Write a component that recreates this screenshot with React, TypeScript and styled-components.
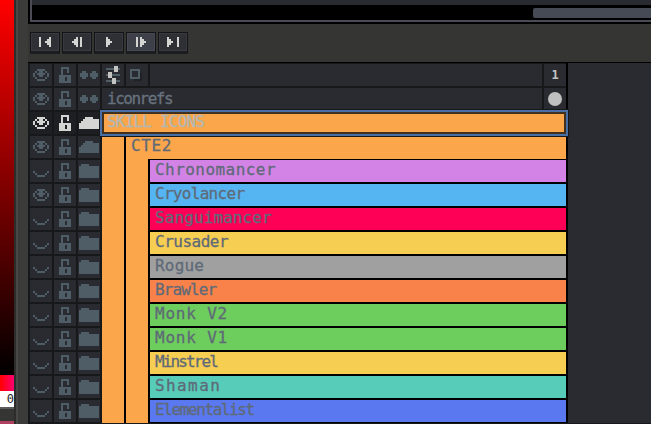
import styled, { createGlobalStyle } from 'styled-components'

const GlobalStyle = createGlobalStyle`
  html, body {
    margin: 0;
    padding: 0;
    background: #353533;
  }
`

const Page = styled.div`
  display: flex;
  width: 651px;
  height: 424px;
  overflow: hidden;
  background: #353533;
`

const ColorColumn = styled.div`
  display: flex;
  flex-direction: column;
  flex: none;
  width: 14px;
  border-right: 2px solid #2c2c2b;
`

const ShadeBar = styled.div`
  height: 375px;
  flex: none;
  background: linear-gradient(180deg, #ff0000 0%, #000000 100%);
`

const HueBar = styled.div`
  height: 16px;
  flex: none;
  background: linear-gradient(90deg, #ff0000, #ff0070);
`

const Swatch = styled.div`
  height: 16px;
  flex: none;
  background: #fff;
  border-bottom: 2px solid #5a5a58;
  color: #222;
  font: 12px/16px 'DejaVu Sans Mono', monospace;
  text-align: right;
  white-space: nowrap;
`

const ColumnFill = styled.div`
  flex: 1;
`

const PinkEdge = styled.div`
  height: 3px;
  flex: none;
  background: #b04060;
`

const Gutter = styled.div`
  flex: none;
  width: 10px;
  border-left: 2px solid #474745;
  background: #3b3b39;
`

const Main = styled.div`
  display: flex;
  flex-direction: column;
  flex: 1;
  min-width: 0;
`

const Preview = styled.div`
  flex: none;
  height: 24px;
  padding-left: 2px;
  box-sizing: border-box;
  background: #000;
`

const PreviewBody = styled.div`
  height: 22px;
  border-left: 2px solid #4b4b55;
  display: flex;
  flex-direction: column;
`

const PreviewTop = styled.div`
  height: 5px;
  flex: none;
  background: #2a2b30;
  border-bottom: 1px solid #000;
`

const ScrollTrack = styled.div`
  flex: none;
  height: 14px;
  padding-top: 2px;
  box-sizing: border-box;
  display: flex;
  justify-content: flex-end;
`

const ScrollThumb = styled.div`
  width: 118px;
  height: 10px;
  border-radius: 2px 0 0 2px;
  background: #454a55;
`

const PreviewRule = styled.div`
  flex: none;
  height: 2px;
  background: #4b4b55;
`

const Transport = styled.div`
  flex: none;
  height: 39px;
  display: flex;
  align-items: flex-start;
  gap: 2px;
  padding: 8px 0 0 2px;
  box-sizing: border-box;
  border-bottom: 1px solid #000;
`

const TransportButton = styled.div<{ $hover?: boolean }>`
  width: 30px;
  height: 22px;
  display: flex;
  align-items: center;
  justify-content: center;
  box-sizing: border-box;
  border: 1px solid #141416;
  border-bottom: 3px solid #1c1d20;
  background: ${(p) => (p.$hover ? '#3d4048' : '#2f3036')};
  box-shadow: inset 0 0 0 1px ${(p) => (p.$hover ? '#464953' : '#393a41')};
`

const Layers = styled.div`
  flex: 1;
  min-height: 0;
  padding-left: 2px;
  background: #17181a;
`

const Row = styled.div`
  display: flex;
  height: 24px;
`

const ToggleCell = styled.div<{ $active?: boolean }>`
  flex: none;
  width: 22px;
  height: 22px;
  margin: 1px 2px 1px 0;
  display: flex;
  align-items: center;
  justify-content: center;
  background: ${(p) => (p.$active ? '#1e1f23' : '#2a2b30')};
`

const Blank = styled.div`
  flex: none;
  width: 392px;
  height: 22px;
  margin: 1px 2px 1px 0;
  background: #2a2b30;
`

const LayerName = styled.div`
  flex: none;
  width: 435px;
  height: 22px;
  margin: 1px 2px 1px 0;
  padding-left: 5px;
  background: #2a2b30;
  color: #68727e;
  font: 16px/21px 'DejaVu Sans Mono', monospace;
  -webkit-text-stroke: 0.3px #68727e;
  letter-spacing: -1.5px;
  white-space: nowrap;
`

const FrameArea = styled.div`
  flex: 1;
  background: #2a2b30;
  border-left: 2px solid #000;
`

const FrameCell = styled.div`
  flex: none;
  width: 22px;
  height: 22px;
  margin: 1px 0;
  display: flex;
  align-items: center;
  justify-content: center;
  background: #2a2b30;
  color: #c4c4c4;
  font: bold 12px 'DejaVu Sans Mono', monospace;
`

const Cel = styled.span`
  width: 14px;
  height: 14px;
  border-radius: 50%;
  background: #c0c0c0;
`

const Selected = styled.div`
  flex: none;
  width: 468px;
  height: 26px;
  margin: -1px -2px -1px -2px;
  position: relative;
  box-sizing: border-box;
  border: 2px solid #4a6fa5;
  outline: 1px solid #17181a;
  background: #fba64a;
  box-shadow: inset 0 0 0 2px #42301f;
  padding-left: 5px;
  color: #b3b7b2;
  font: 16px/20px 'DejaVu Sans Mono', monospace;
  -webkit-text-stroke: 0.3px #b3b7b2;
  letter-spacing: -0.8px;
  white-space: nowrap;
`

const Tree = styled.div`
  flex: none;
  width: 464px;
  height: 24px;
  display: flex;
  background: #fba64a;
`

const Indent = styled.div`
  flex: none;
  width: 22px;
  background: #fba64a;
  border-right: 2px solid #000;
`

const IndentPlain = styled.div`
  flex: none;
  width: 22px;
  background: #fba64a;
`

const Label = styled.div<{ $bg: string; $spacing: number }>`
  flex: 1;
  padding-left: 5px;
  margin: 1px 0;
  height: 22px;
  background: ${(p) => p.$bg};
  border-left: 2px solid #000;
  color: #5f6a78;
  font: 16px/20px 'DejaVu Sans Mono', monospace;
  -webkit-text-stroke: 0.3px #5f6a78;
  letter-spacing: ${(p) => p.$spacing}px;
  white-space: nowrap;
  box-shadow: 0 -1px 0 #000, 0 1px 0 #000;
`

const GroupLabel = styled.div`
  flex: 1;
  padding-left: 5px;
  color: #5f6a78;
  font: 16px/22px 'DejaVu Sans Mono', monospace;
  -webkit-text-stroke: 0.3px #5f6a78;
  letter-spacing: 0.6px;
`

const Pixels = styled.svg`
  display: block;
  shape-rendering: crispEdges;
`

const LIGHT = '#c4c4c2'
const SHADOW = '#202125'

function PixelIcon({ rows, color }: { rows: string[]; color: string }) {
  const width = rows[0].length
  const fills: Record<string, string> = { '#': color, o: LIGHT, d: SHADOW }
  return (
    <Pixels width={width * 2} height={rows.length * 2} viewBox={`0 0 ${width} ${rows.length}`}>
      {rows.flatMap((row, y) =>
        row.split('').map((c, x) =>
          fills[c] ? <rect key={`${x}-${y}`} x={x} y={y} width={1} height={1} fill={fills[c]} /> : null,
        ),
      )}
    </Pixels>
  )
}

const EYE = ['..####..', '.#.##.#.', '#.####.#', '#..##..#', '.#....#.', '..####..']
const EYE_CLOSED = ['........', '........', '........', '#......#', '.#....#.', '..####..']
const LOCK = ['.####.', '.#..#.', '.#..#.', '.#....', '######', '###.##', '###.##', '######']
const DOTS = ['.##...##.', '####.####', '####.####', '.##...##.']
const FOLDER = ['.####.....', '##########', '##########', '##########', '##########', '##########', '##########']
const FOLDER_OPEN = ['...####...', '..########', '.#########', '##########', '##########', '##########']
const SKIP_START = ['#....#', '#...##', '#..###', '#...##', '#....#']
const STEP_BACK = ['..#.#', '.##.#', '###.#', '.##.#', '..#.#']
const PLAY = ['#..', '##.', '###', '##.', '#..']
const STEP_NEXT = ['#.#..', '#.##.', '#.###', '#.##.', '#.#..']
const SKIP_END = ['#....#', '##...#', '###..#', '##...#', '#....#']
const SLIDERS = ['....oo.', '####oo#', '....oo.', '.oo....', '#oo####', '.oo....', '...oo..', '###oo##', '...oo..']
const SQUARE = ['#####..', '#...#..', '#...#d.', '#...#d.', '#####d.', '..dddd.']

const MUTED = '#4f5e66'
const BRIGHT = '#d4d4d2'

const children = [
  { name: 'Chronomancer', bg: '#d383e5', spacing: 0.45, hidden: true },
  { name: 'Cryolancer', bg: '#55b5f3', spacing: -0.7, hidden: false },
  { name: 'Sanguimancer', bg: '#ff0057', spacing: 0.1, hidden: true },
  { name: 'Crusader', bg: '#f6ce52', spacing: -0.5, hidden: true },
  { name: 'Rogue', bg: '#a0a0a0', spacing: 0.2, hidden: true },
  { name: 'Brawler', bg: '#f9824a', spacing: -0.9, hidden: true },
  { name: 'Monk V2', bg: '#6dcd5d', spacing: 0.8, hidden: true },
  { name: 'Monk V1', bg: '#6dcd5d', spacing: 0.8, hidden: true },
  { name: 'Minstrel', bg: '#f6ce52', spacing: -1.9, hidden: true },
  { name: 'Shaman', bg: '#57ccb8', spacing: 1.4, hidden: true },
  { name: 'Elementalist', bg: '#5a78f0', spacing: -1.4, hidden: true },
]

function Toggles({ eye, folder, color = MUTED, active }: { eye: string[]; folder: string[]; color?: string; active?: boolean }) {
  return (
    <>
      <ToggleCell $active={active}><PixelIcon rows={eye} color={color} /></ToggleCell>
      <ToggleCell $active={active}><PixelIcon rows={LOCK} color={color} /></ToggleCell>
      <ToggleCell $active={active}><PixelIcon rows={folder} color={color} /></ToggleCell>
    </>
  )
}

export default function App() {
  return (
    <Page>
      <GlobalStyle />
      <ColorColumn>
        <ShadeBar />
        <HueBar />
        <Swatch>0</Swatch>
        <ColumnFill />
        <PinkEdge />
      </ColorColumn>
      <Gutter />
      <Main>
        <Preview>
          <PreviewBody>
            <PreviewTop />
            <ScrollTrack><ScrollThumb /></ScrollTrack>
            <PreviewRule />
          </PreviewBody>
        </Preview>
        <Transport>
          <TransportButton><PixelIcon rows={SKIP_START} color={BRIGHT} /></TransportButton>
          <TransportButton><PixelIcon rows={STEP_BACK} color={BRIGHT} /></TransportButton>
          <TransportButton><PixelIcon rows={PLAY} color={BRIGHT} /></TransportButton>
          <TransportButton $hover><PixelIcon rows={STEP_NEXT} color={BRIGHT} /></TransportButton>
          <TransportButton><PixelIcon rows={SKIP_END} color={BRIGHT} /></TransportButton>
        </Transport>
        <Layers>
          <Row>
            <Toggles eye={EYE} folder={DOTS} />
            <ToggleCell><PixelIcon rows={SLIDERS} color={MUTED} /></ToggleCell>
            <ToggleCell><PixelIcon rows={SQUARE} color={MUTED} /></ToggleCell>
            <Blank />
            <FrameCell>1</FrameCell>
            <FrameArea />
          </Row>
          <Row>
            <Toggles eye={EYE} folder={DOTS} />
            <LayerName>iconrefs</LayerName>
            <FrameCell><Cel /></FrameCell>
            <FrameArea />
          </Row>
          <Row>
            <Toggles eye={EYE} folder={FOLDER_OPEN} color={BRIGHT} active />
            <Selected>SKILL ICONS</Selected>
            <FrameArea />
          </Row>
          <Row>
            <Toggles eye={EYE} folder={FOLDER_OPEN} />
            <Tree>
              <Indent />
              <GroupLabel>CTE2</GroupLabel>
            </Tree>
            <FrameArea />
          </Row>
          {children.map((child) => (
            <Row key={child.name}>
              <Toggles eye={child.hidden ? EYE_CLOSED : EYE} folder={FOLDER} />
              <Tree>
                <Indent />
                <IndentPlain />
                <Label $bg={child.bg} $spacing={child.spacing}>{child.name}</Label>
              </Tree>
              <FrameArea />
            </Row>
          ))}
        </Layers>
      </Main>
    </Page>
  )
}
